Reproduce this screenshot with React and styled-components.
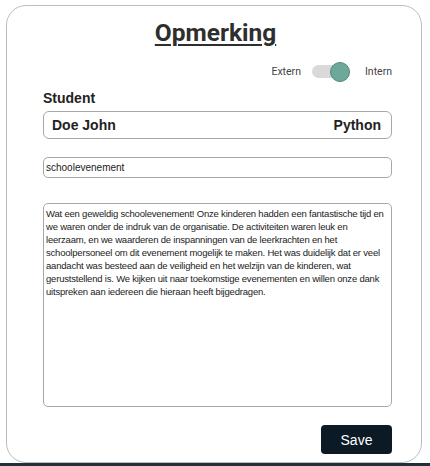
import styled, { createGlobalStyle } from "styled-components";

const GlobalStyle = createGlobalStyle`
	html, body {
		margin: 0;
		padding: 0;
		background: #ffffff;
	}
	body {
		font-family: "Liberation Sans", Arial, sans-serif;
	}
`;

const Page = styled.div`
	display: flex;
	flex-direction: column;
	height: 466px;
	width: 430px;
	box-sizing: border-box;
	overflow: hidden;
`;

const Stage = styled.div`
	flex: 1;
	padding: 5px 8px 0 6px;
	min-height: 0;
`;

const Card = styled.div`
	box-sizing: border-box;
	height: 458px;
	border: 1.5px solid #bdbdbd;
	border-radius: 20px;
	padding: 13px 29px 0 36px;
	display: flex;
	flex-direction: column;
`;

const BottomBar = styled.div`
	height: 3px;
	background: #1f3038;
`;

const Title = styled.h1`
	margin: 0 4px 0 0;
	text-align: center;
	font-family: Roboto, "Liberation Sans", sans-serif;
	font-weight: 700;
	font-size: 24.5px;
	line-height: 28px;
	color: #2e2e2e;
	text-decoration: underline;
	text-underline-offset: 3px;
	text-decoration-thickness: 2px;
`;

const ToggleRow = styled.div`
	display: flex;
	justify-content: flex-end;
	align-items: center;
	gap: 11px;
	margin-top: 18px;
	font-family: Roboto, "Liberation Sans", sans-serif;
	font-size: 10.5px;
	color: #444;
`;

const Switch = styled.div`
	position: relative;
	width: 28px;
	height: 13px;
	border-radius: 7px;
	background: #d9d9d9;
	margin-right: 14px;
`;

const Thumb = styled.span`
	position: absolute;
	top: 50%;
	left: ${(p) => (p.$on ? "18px" : "-10px")};
	width: 20px;
	height: 20px;
	margin-top: -10px;
	border-radius: 50%;
	background: #6da89b;
	border: 1px solid #4f8a7e;
	box-sizing: border-box;
`;

const Label = styled.label`
	margin-top: 12px;
	font-size: 14px;
	font-weight: 700;
	color: #222;
`;

const FieldBox = styled.div`
	box-sizing: border-box;
	margin-top: 5px;
	height: 28px;
	border: 1px solid #a8a8a8;
	border-radius: 6px;
	display: flex;
	justify-content: space-between;
	align-items: center;
	padding: 0 10px 0 8px;
	font-size: 14px;
	font-weight: 700;
	color: #222;
`;

const TextInput = styled.input`
	box-sizing: border-box;
	margin-top: 18px;
	width: 100%;
	height: 21px;
	border: 1px solid #a8a8a8;
	border-radius: 5px;
	padding: 0 2px;
	font-family: "Liberation Sans", Arial, sans-serif;
	font-size: 10px;
	color: #222;
	outline: none;
`;

const TextArea = styled.textarea`
	box-sizing: border-box;
	margin-top: 25px;
	width: 100%;
	height: 204px;
	border: 1px solid #a8a8a8;
	border-radius: 5px;
	padding: 3px 2px 3px 2px;
	font-family: "Liberation Sans", Arial, sans-serif;
	font-size: 9.5px;
	letter-spacing: -0.2px;
	line-height: 13px;
	color: #222;
	resize: none;
	outline: none;
`;

const Footer = styled.div`
	display: flex;
	justify-content: flex-end;
	margin-top: 18px;
`;

const SaveButton = styled.button`
	width: 71px;
	height: 29px;
	border: none;
	border-radius: 4px;
	background: #0b1a25;
	color: #fff;
	font-family: "Liberation Sans", Arial, sans-serif;
	font-size: 14px;
	cursor: pointer;
`;

const comment =
	"Wat een geweldig schoolevenement! Onze kinderen hadden een fantastische tijd en we waren onder de indruk van de organisatie. De activiteiten waren leuk en leerzaam, en we waarderen de inspanningen van de leerkrachten en het schoolpersoneel om dit evenement mogelijk te maken. Het was duidelijk dat er veel aandacht was besteed aan de veiligheid en het welzijn van de kinderen, wat geruststellend is. We kijken uit naar toekomstige evenementen en willen onze dank uitspreken aan iedereen die hieraan heeft bijgedragen.";

export default function App() {
	return (
		<>
			<GlobalStyle />
			<Page>
				<Stage>
					<Card>
						<Title>Opmerking</Title>
						<ToggleRow>
							<span>Extern</span>
							<Switch>
								<Thumb $on />
							</Switch>
							<span>Intern</span>
						</ToggleRow>
						<Label>Student</Label>
						<FieldBox>
							<span>Doe John</span>
							<span>Python</span>
						</FieldBox>
						<TextInput defaultValue="schoolevenement" />
						<TextArea defaultValue={comment} />
						<Footer>
							<SaveButton>Save</SaveButton>
						</Footer>
					</Card>
				</Stage>
				<BottomBar />
			</Page>
		</>
	);
}
